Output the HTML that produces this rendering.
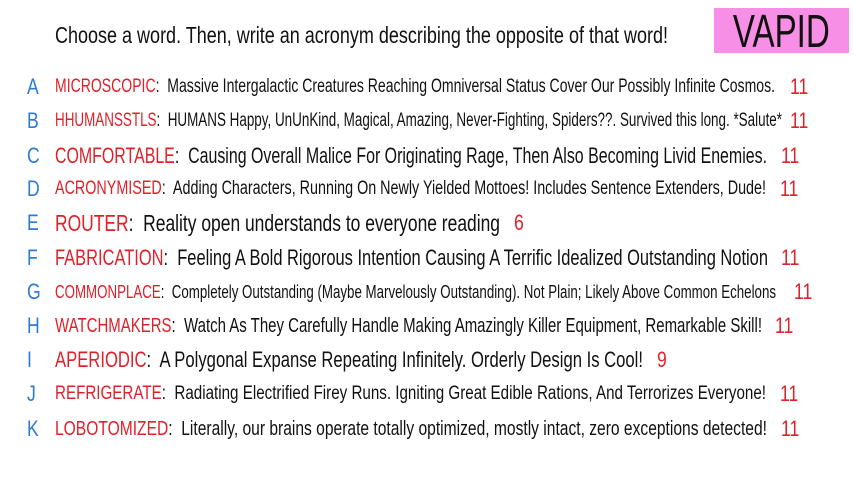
<!DOCTYPE html>
<html><head><meta charset="utf-8"><style>
body{margin:0;width:853px;height:480px;background:#fff;position:relative;overflow:hidden;font-family:"Liberation Sans Narrow","Liberation Sans",sans-serif;color:#111}
.row{position:absolute;left:0;height:30px;width:853px}
.L{position:absolute;left:27px;top:0;color:#2b7ad6;font-size:22px;line-height:30px;transform:scaleX(.8);transform-origin:0 50%}
.t{position:absolute;left:55px;top:0;white-space:nowrap;line-height:30px;transform-origin:0 50%}
.w{color:#e0202a}
.n{position:absolute;top:0;color:#e0202a;font-size:22px;line-height:30px;transform:scaleX(.8);transform-origin:0 50%}
#h{position:absolute;left:55px;top:20px;font-size:23px;line-height:30px;white-space:nowrap;transform-origin:0 50%}
#v{position:absolute;left:714px;top:8px;width:135px;height:45px;background:#f78fe6;font-size:46px;line-height:47px;text-align:center;color:#111}
</style></head><body>
<div id="h" data-w="613">Choose a word. Then, write an acronym describing the opposite of that word!</div>
<div id="v"><span style="display:inline-block;transform:scaleX(.72)">VAPID</span></div>

<div class="row" style="top:72px"><span class="L">A</span><span class="t" data-w="720" style="font-size:19px"><span class="w">MICROSCOPIC</span>:&nbsp; Massive Intergalactic Creatures Reaching Omniversal Status Cover Our Possibly Infinite Cosmos.</span><span class="n" style="left:790px">11</span></div>
<div class="row" style="top:106px"><span class="L">B</span><span class="t" data-w="727" style="font-size:19px"><span class="w">HHUMANSSTLS</span>:&nbsp; HUMANS Happy, UnUnKind, Magical, Amazing, Never-Fighting, Spiders??. Survived this long. *Salute*</span><span class="n" style="left:790px">11</span></div>
<div class="row" style="top:141px"><span class="L">C</span><span class="t" data-w="712" style="font-size:22px"><span class="w">COMFORTABLE</span>:&nbsp; Causing Overall Malice For Originating Rage, Then Also Becoming Livid Enemies.</span><span class="n" style="left:781px">11</span></div>
<div class="row" style="top:174px"><span class="L">D</span><span class="t" data-w="711" style="font-size:19px"><span class="w">ACRONYMISED</span>:&nbsp; Adding Characters, Running On Newly Yielded Mottoes! Includes Sentence Extenders, Dude!</span><span class="n" style="left:780px">11</span></div>
<div class="row" style="top:208px"><span class="L">E</span><span class="t" data-w="445" style="font-size:23px"><span class="w">ROUTER</span>:&nbsp; Reality open understands to everyone reading</span><span class="n" style="left:514px">6</span></div>
<div class="row" style="top:243px"><span class="L">F</span><span class="t" data-w="713" style="font-size:22px"><span class="w">FABRICATION</span>:&nbsp; Feeling A Bold Rigorous Intention Causing A Terrific Idealized Outstanding Notion</span><span class="n" style="left:781px">11</span></div>
<div class="row" style="top:277px"><span class="L">G</span><span class="t" data-w="721" style="font-size:18px"><span class="w">COMMONPLACE</span>:&nbsp; Completely Outstanding (Maybe Marvelously Outstanding). Not Plain; Likely Above Common Echelons</span><span class="n" style="left:794px">11</span></div>
<div class="row" style="top:311px"><span class="L">H</span><span class="t" data-w="707" style="font-size:20px"><span class="w">WATCHMAKERS</span>:&nbsp; Watch As They Carefully Handle Making Amazingly Killer Equipment, Remarkable Skill!</span><span class="n" style="left:775px">11</span></div>
<div class="row" style="top:345px"><span class="L">I</span><span class="t" data-w="588" style="font-size:22px"><span class="w">APERIODIC</span>:&nbsp; A Polygonal Expanse Repeating Infinitely. Orderly Design Is Cool!</span><span class="n" style="left:657px">9</span></div>
<div class="row" style="top:379px"><span class="L">J</span><span class="t" data-w="711" style="font-size:19px"><span class="w">REFRIGERATE</span>:&nbsp; Radiating Electrified Firey Runs. Igniting Great Edible Rations, And Terrorizes Everyone!</span><span class="n" style="left:780px">11</span></div>
<div class="row" style="top:414px"><span class="L">K</span><span class="t" data-w="712" style="font-size:20px"><span class="w">LOBOTOMIZED</span>:&nbsp; Literally, our brains operate totally optimized, mostly intact, zero exceptions detected!</span><span class="n" style="left:781px">11</span></div>
<script>
document.querySelectorAll('[data-w]').forEach(function(e){
  var w=e.getBoundingClientRect().width, t=+e.getAttribute('data-w');
  if(w>0) e.style.transform='scaleX('+(t/w)+')';
});
</script>
</body></html>
